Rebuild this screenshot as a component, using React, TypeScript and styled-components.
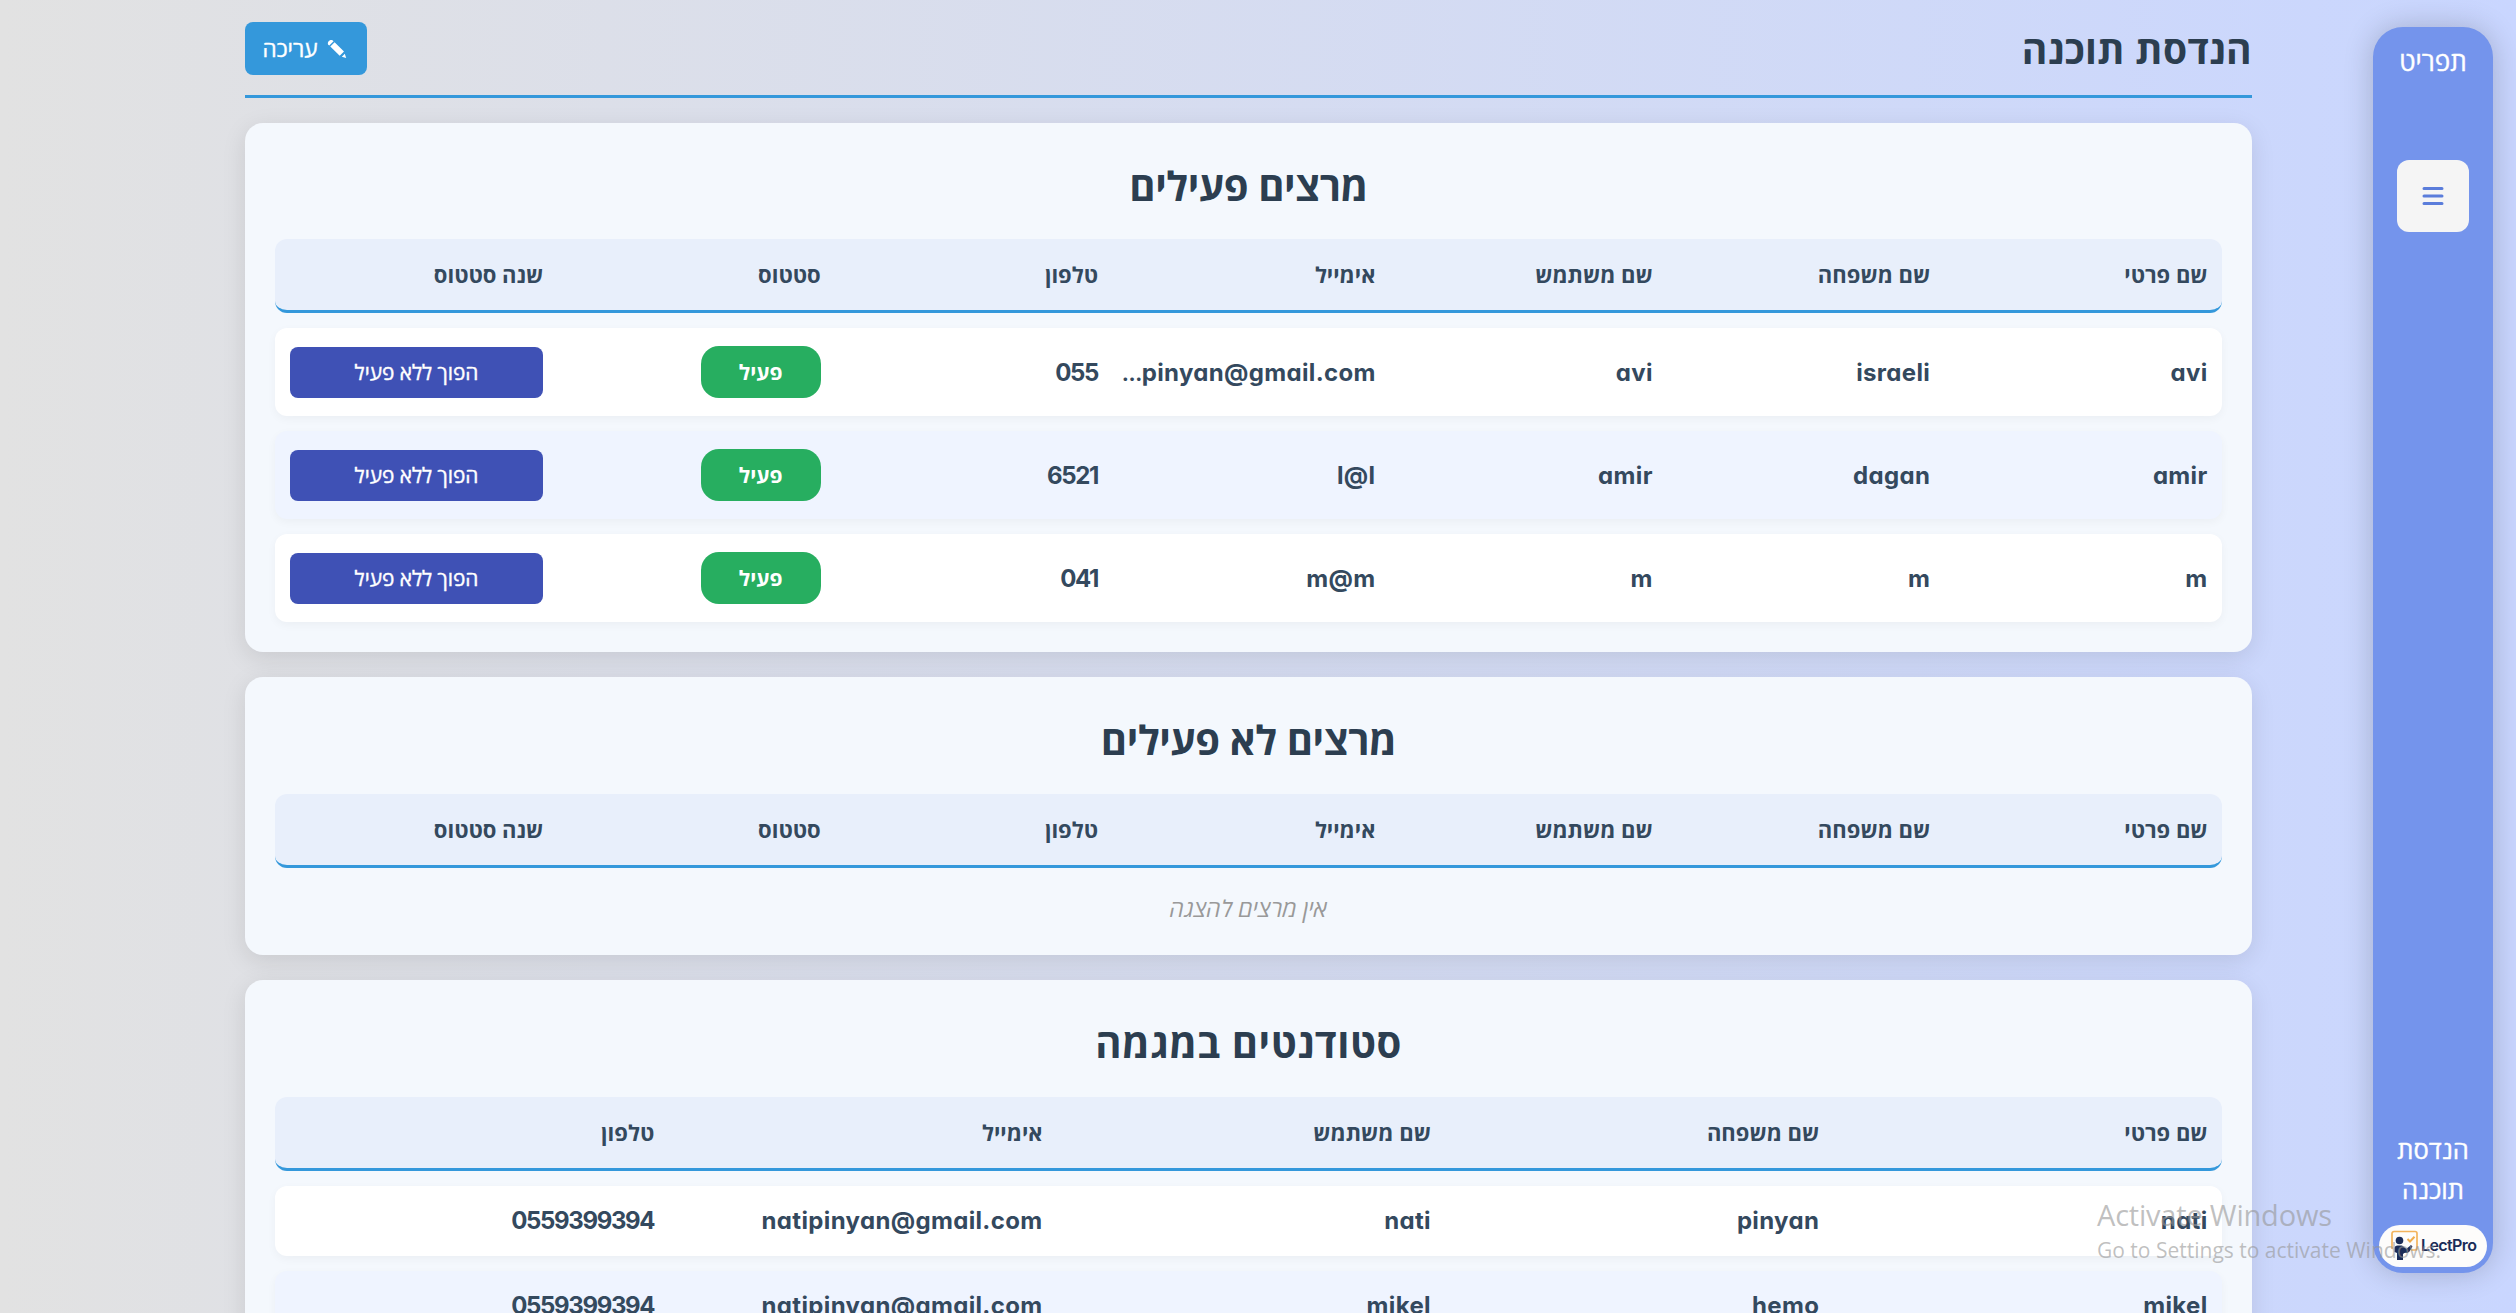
import React from "react";
import styled, { createGlobalStyle, css } from "styled-components";

const Global = createGlobalStyle`
  * { box-sizing: border-box; }
  html, body { margin: 0; height: 100%; overflow: hidden; }
  body { font-family: Inter, "Open Sans", "DejaVu Sans", sans-serif; }
`;

const hebrew = css`font-family: "Open Sans", "DejaVu Sans", sans-serif;`;

const sturdy = css`-webkit-text-stroke: 0.4px currentColor;`;

const Page = styled.div`
  direction: rtl;
  height: 1313px;
  overflow: hidden;
  display: flex;
  align-items: flex-start;
  background: linear-gradient(to right, #e2e2e2, #c9d6ff);
`;

const Sidebar = styled.aside`
  flex: none;
  width: 120px;
  height: 1246px;
  margin: 27px 23px 0 0;
  padding: 16px 6px 6px;
  display: flex;
  flex-direction: column;
  align-items: center;
  border-radius: 30px;
  background: #7494ec;
  box-shadow: 0 0 30px rgba(0, 0, 0, 0.2);
  color: #fff;
  ${hebrew}
`;

const MenuTitle = styled.div`
  font-size: 26px;
  line-height: 36px;
  ${sturdy}
`;

const MenuButton = styled.button`
  width: 72px;
  height: 72px;
  margin: 81px 0 auto;
  padding: 0;
  border: 0;
  border-radius: 12px;
  background: #f5f5f5;
  display: flex;
  align-items: center;
  justify-content: center;
`;

const Department = styled.div`
  font-size: 25.5px;
  line-height: 40px;
  text-align: center;
  width: 90px;
  margin-bottom: 16px;
  ${sturdy}
`;

const LogoPill = styled.div`
  width: 108px;
  height: 42px;
  border-radius: 21px;
  background: #fdfcfb;
  display: flex;
  align-items: center;
  padding-left: 11px;
  gap: 2px;
  direction: ltr;
  color: #1b2c58;
  font: 600 16px Inter, sans-serif;
  letter-spacing: -0.6px;
`;

const LogoText = styled.span`
  padding-bottom: 3px;
`;

const Main = styled.main`
  width: 2007px;
  margin-right: 121px;
  padding-top: 22px;
`;

const Header = styled.header`
  display: flex;
  justify-content: space-between;
  align-items: center;
  height: 76px;
  padding-bottom: 20px;
  border-bottom: 3px solid #3498db;
  margin-bottom: 25px;
`;

const Title = styled.h1`
  margin: 0;
  font-size: 39px;
  font-weight: 700;
  letter-spacing: 0.3px;
  color: #2c3e50;
  ${hebrew}
`;

const EditButton = styled.button`
  width: 122px;
  height: 53px;
  padding: 0 0 0 2px;
  border: 0;
  border-radius: 8px;
  background: #3498db;
  color: #fff;
  display: flex;
  align-items: center;
  justify-content: center;
  gap: 10px;
  padding: 0 2px 0 0;
  font-size: 22.5px;
  ${sturdy}
  ${hebrew}
`;

const Card = styled.section<{ $height: number }>`
  height: ${(p) => p.$height}px;
  padding: 30px;
  margin-bottom: 25px;
  border-radius: 18px;
  background: #f4f8fd;
  box-shadow: 0 6px 24px rgba(0, 0, 0, 0.1);
  display: flex;
  flex-direction: column;
`;

const CardTitle = styled.h2<{ $spacing: number }>`
  flex: none;
  margin: 0 0 25px;
  height: 61.4px;
  line-height: 65px;
  text-align: center;
  font-size: 40px;
  font-weight: 700;
  letter-spacing: ${(p) => p.$spacing}px;
  color: #2c3e50;
  ${hebrew}
`;

const rowGrid = css<{ $cols: number }>`
  flex: none;
  display: grid;
  grid-template-columns: repeat(${(p) => p.$cols}, minmax(0, 1fr));
  column-gap: 24px;
  align-items: center;
  padding: 0 14.4px 0 14.8px;
  border-radius: 12px;
  color: #34495e;
  font-weight: 700;
`;

const HeadRow = styled.div<{ $cols: number }>`
  ${rowGrid}
  height: 74px;
  padding-bottom: 1px;
  background: #e8effb;
  border-bottom: 3px solid #3498db;
  font-size: 22px;
  ${hebrew}
`;

const Row = styled.div<{ $cols: number; $tall?: boolean; $tint?: boolean }>`
  ${rowGrid}
  height: ${(p) => (p.$tall ? 88 : 70)}px;
  margin-top: 15px;
  background: ${(p) => (p.$tint ? "#eff4ff" : "#fff")};
  box-shadow: 0 3px 10px rgba(0, 0, 0, 0.04);
  font-size: 24px;
`;

const Cell = styled.div<{ $numeric?: boolean }>`
  direction: ltr;
  text-align: right;
  white-space: nowrap;
  font-feature-settings: "cv11";
  letter-spacing: ${(p) => (p.$numeric ? -1.35 : 0.35)}px;
`;

const Clip = styled.span`
  font-size: 18px;
  font-weight: 900;
  letter-spacing: -0.5px;
`;

const Badge = styled.span`
  width: 120px;
  height: 52px;
  border-radius: 18px;
  background: #27ae60;
  color: #fff;
  display: flex;
  align-items: center;
  justify-content: center;
  font-size: 21px;
  ${hebrew}
`;

const ToggleButton = styled.button`
  height: 51px;
  border: 0;
  border-radius: 8px;
  background: #3f51b5;
  color: #fff;
  font-size: 20.8px;
  ${sturdy}
  ${hebrew}
`;

const Empty = styled.p`
  margin: 20px 0 0;
  text-align: center;
  font-size: 23px;
  letter-spacing: 0.3px;
  line-height: 40px;
  font-style: italic;
  color: #999;
  ${hebrew}
`;

const Watermark = styled.div`
  position: absolute;
  left: 2097px;
  top: 1194px;
  font-family: "Open Sans", sans-serif;
  color: rgba(150, 150, 150, 0.6);
  white-space: nowrap;
`;

const WatermarkTitle = styled.div`
  font-size: 29px;
  line-height: 42px;
  letter-spacing: -0.2px;
`;

const WatermarkText = styled.div`
  font-size: 21px;
  line-height: 28px;
`;

const STAFF_COLUMNS = ["שם פרטי", "שם משפחה", "שם משתמש", "אימייל", "טלפון", "סטטוס", "שנה סטטוס"];
const STUDENT_COLUMNS = STAFF_COLUMNS.slice(0, 5);

const STAFF = [
  ["avi", "israeli", "avi", "…pinyan@gmail.com", "055"],
  ["amir", "dagan", "amir", "l@l", "6521"],
  ["m", "m", "m", "m@m", "041"],
];

const STUDENTS = [
  ["nati", "pinyan", "nati", "natipinyan@gmail.com", "0559399394"],
  ["mikel", "hemo", "mikel", "natipinyan@gmail.com", "0559399394"],
];

function Head({ columns }: { columns: string[] }) {
  return (
    <HeadRow $cols={columns.length}>
      {columns.map((c) => (
        <span key={c}>{c}</span>
      ))}
    </HeadRow>
  );
}

function Value({ text }: { text: string }) {
  const clipped = text.startsWith("…");
  return (
    <Cell $numeric={/^\d+$/.test(text)}>
      {clipped && <Clip>…</Clip>}
      {clipped ? text.slice(1) : text}
    </Cell>
  );
}

function LogoMark() {
  return (
    <svg width="29" height="32" viewBox="0 0 29 32" fill="none">
      <path d="M2 19V3.500a2 2 0 0 1 2-2h21a2 2 0 0 1 2 2V18a2 2 0 0 1-2 2h-4" stroke="#f3b35c" strokeWidth="1.700" />
      <path d="M17.500 9l2.500 2.500 4.500-4.800" stroke="#f0ad4e" strokeWidth="2" />
      <circle cx="9.500" cy="10.500" r="3.800" fill="#1b2c58" />
      <path d="M4.500 22v-3.500c0-2 1.200-3 3.200-3h4.300l4.500 3.200 4.500-3.700 1.500 1.500-3 5-2 1.500a4 4 0 0 0-4.500 1v6H7v-7z" fill="#1b2c58" />
    </svg>
  );
}

export default function App() {
  return (
    <Page dir="rtl">
      <Global />
      <Sidebar>
        <MenuTitle>תפריט</MenuTitle>
        <MenuButton aria-label="תפריט">
          <svg width="22" height="20" viewBox="0 0 22 20" stroke="#5b7ddb" strokeWidth="3" strokeLinecap="round">
            <path d="M2 2.500h18M2 10h18M2 17.500h18" />
          </svg>
        </MenuButton>
        <Department>הנדסת תוכנה</Department>
        <LogoPill>
          <LogoMark />
          <LogoText>LectPro</LogoText>
        </LogoPill>
      </Sidebar>
      <Main>
        <Header>
          <Title>הנדסת תוכנה</Title>
          <EditButton>
            <svg width="20" height="20" viewBox="0 0 20 20" fill="#fff">
              <path d="M1.200 5.800C0 3 2.500.2 5.500 1.200L6.600 2.200 2.300 6.600zM3.300 7.600L7.600 3.200l9.400 9.200-4.300 4.400zM14.800 17.700l3-3 1.400 4.300z" />
            </svg>
            עריכה
          </EditButton>
        </Header>
        <Card $height={529.3}>
          <CardTitle $spacing={-0.4}>מרצים פעילים</CardTitle>
          <Head columns={STAFF_COLUMNS} />
          {STAFF.map((person, i) => (
            <Row key={i} $cols={7} $tall $tint={i % 2 === 1}>
              {person.map((value, j) => (
                <Value key={j} text={value} />
              ))}
              <Badge>פעיל</Badge>
              <ToggleButton>הפוך ללא פעיל</ToggleButton>
            </Row>
          ))}
        </Card>
        <Card $height={278}>
          <CardTitle $spacing={-0.4}>מרצים לא פעילים</CardTitle>
          <Head columns={STAFF_COLUMNS} />
          <Empty>אין מרצים להצגה</Empty>
        </Card>
        <Card $height={500}>
          <CardTitle $spacing={0.5}>סטודנטים במגמה</CardTitle>
          <Head columns={STUDENT_COLUMNS} />
          {STUDENTS.map((person, i) => (
            <Row key={i} $cols={5} $tint={i % 2 === 1}>
              {person.map((value, j) => (
                <Value key={j} text={value} />
              ))}
            </Row>
          ))}
        </Card>
      </Main>
      <Watermark dir="ltr">
        <WatermarkTitle>Activate Windows</WatermarkTitle>
        <WatermarkText>Go to Settings to activate Windows.</WatermarkText>
      </Watermark>
    </Page>
  );
}
